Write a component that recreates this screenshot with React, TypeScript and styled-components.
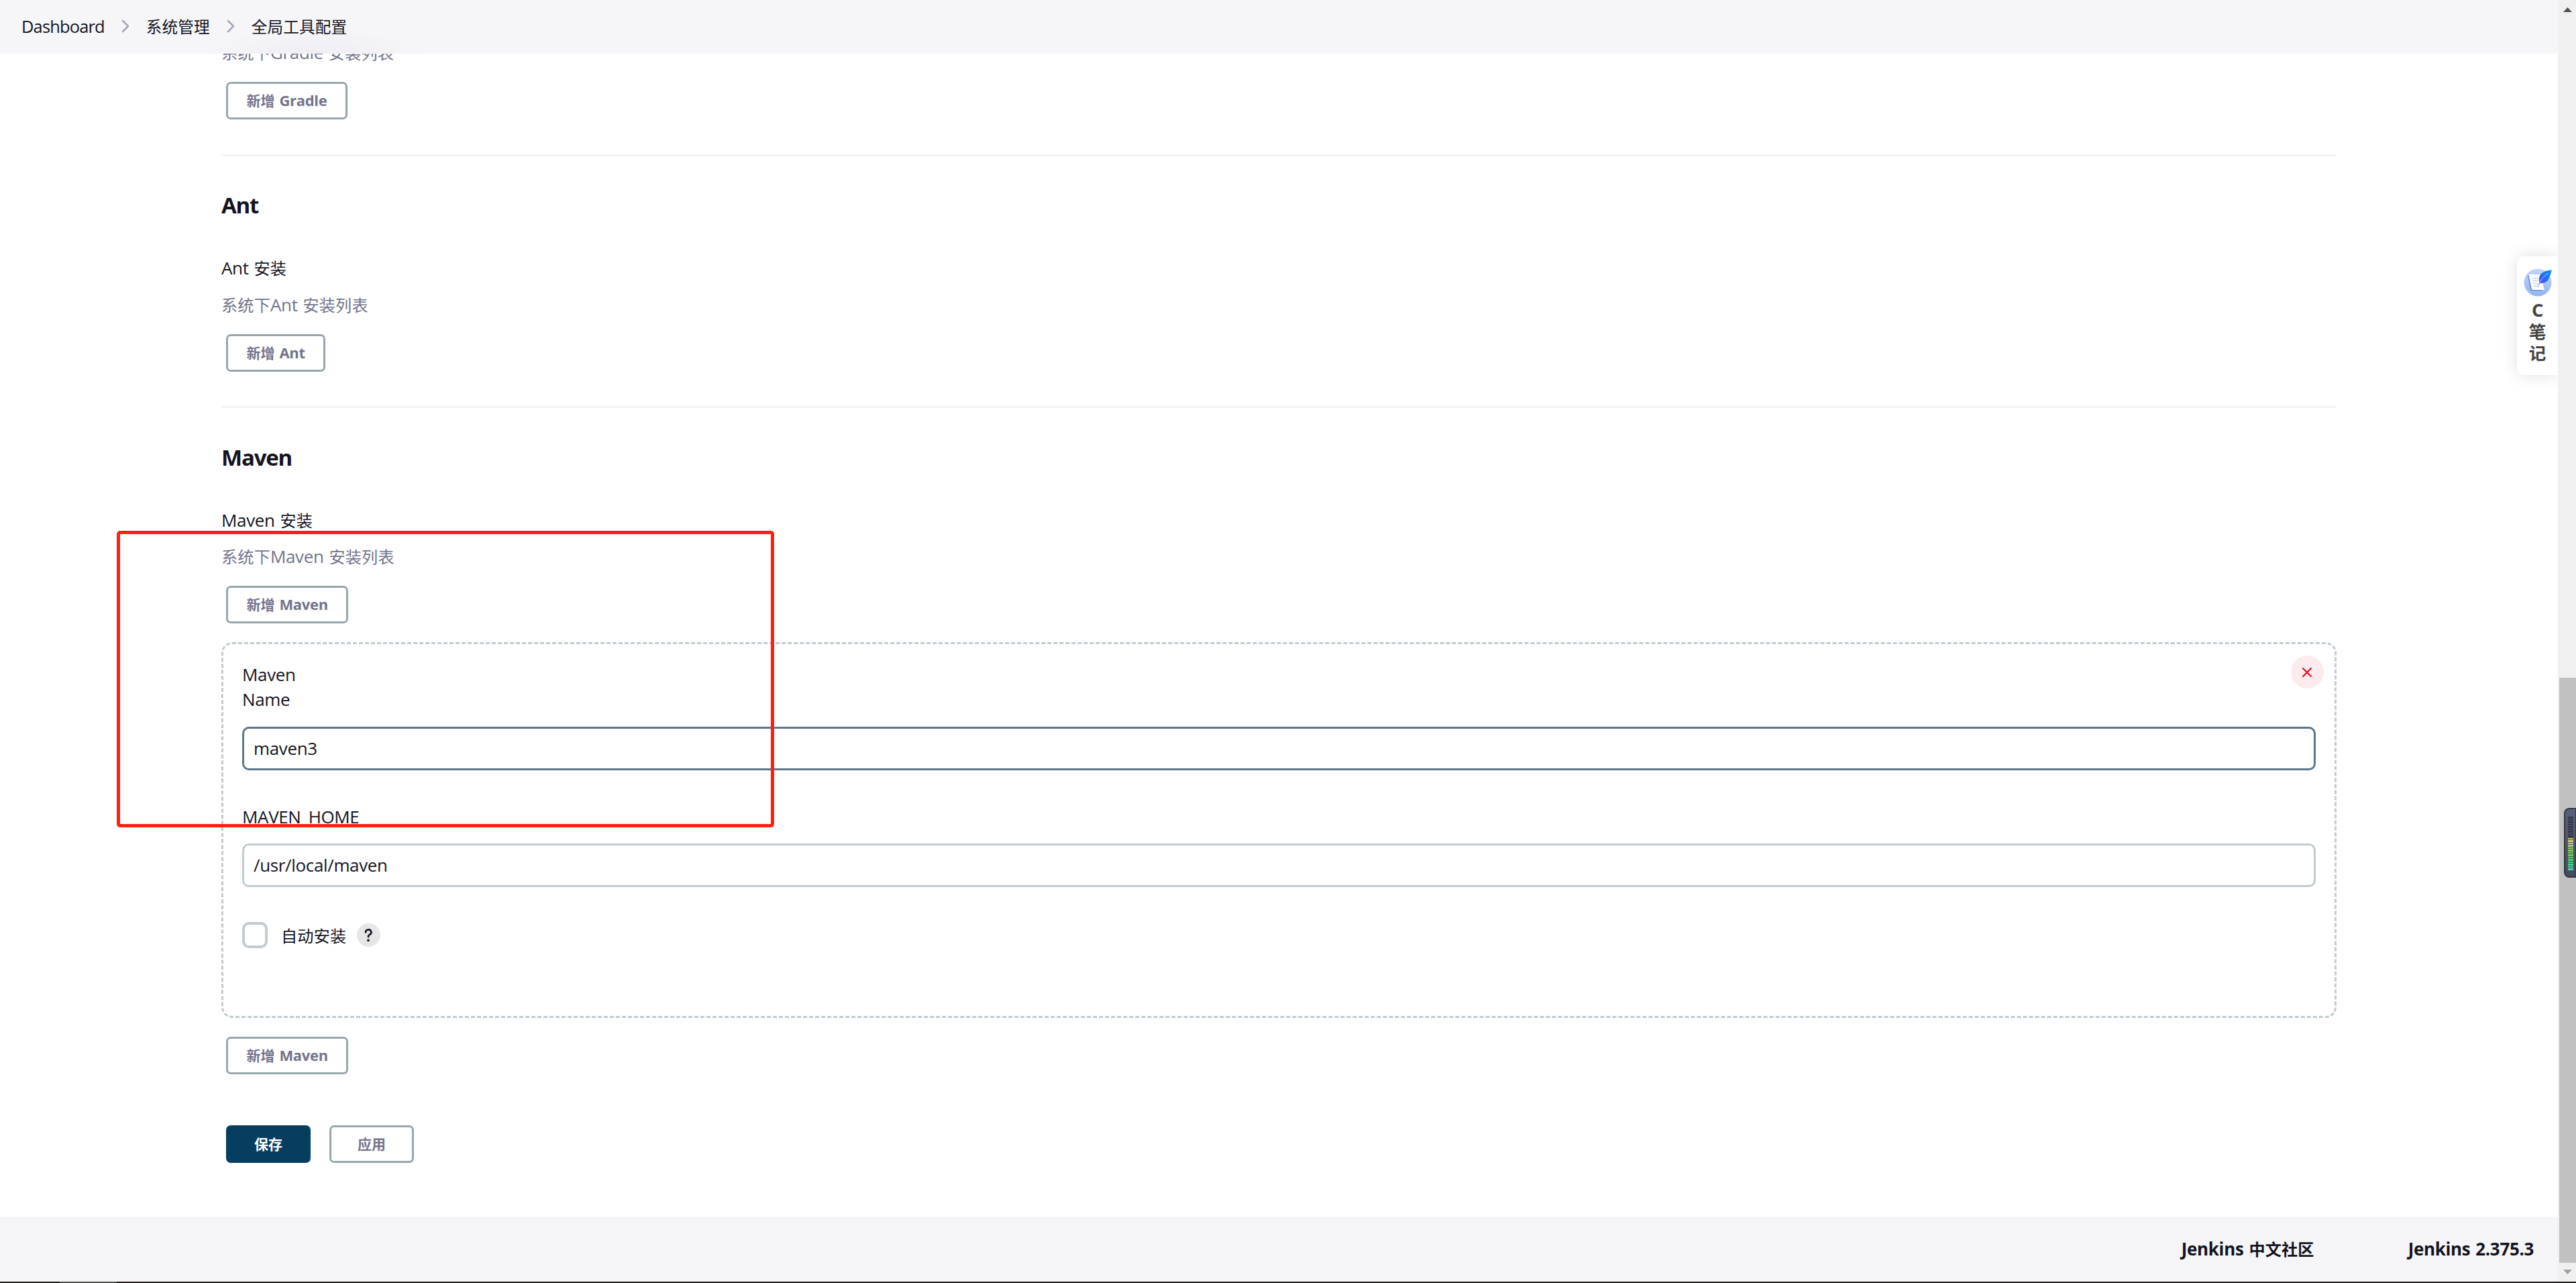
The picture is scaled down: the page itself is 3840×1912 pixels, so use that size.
import { FC, Fragment } from 'react';
import styled, { createGlobalStyle, css } from 'styled-components';

const GlobalStyle = createGlobalStyle`
  * { box-sizing: border-box; }
  body {
    margin: 0;
    overflow: hidden;
    background: #fff;
    color: #14141f;
    font-family: "Open Sans", "Noto Sans CJK SC", sans-serif;
    font-size: 26px;
    line-height: 36px;
    letter-spacing: -0.35px;
    word-spacing: 1.5px;
  }
`;

const Screen = styled.div`
  width: 3840px;
  height: 1912px;
  display: flex;
  flex-direction: column;
  position: relative;
`;

const Viewport = styled.div`
  flex: 1;
  min-height: 0;
  display: flex;
`;

const Page = styled.div`
  flex: 1;
  display: flex;
  flex-direction: column;
`;

// Chinese glyphs run a little smaller than the latin ones
const Han = styled.span`
  font-size: 0.93em;
  letter-spacing: 0.006em;
  line-height: 0;
`;

const Breadcrumbs = styled.header`
  height: 80px;
  flex: none;
  display: flex;
  align-items: center;
  padding: 0 0 2px 32px;
  font-size: 25.4px;
  letter-spacing: -0.8px;
  background:
    radial-gradient(ellipse 170px 44px at 470px 84px, #eeedf3, transparent),
    #f6f6f8;
`;

const Chevron = styled.svg`
  width: 12px;
  height: 20px;
  margin: 0 25px;
  fill: none;
  stroke: #a6a6ba;
  stroke-width: 2.6;
  stroke-linecap: round;
  stroke-linejoin: round;
`;

const Content = styled.main`
  flex: 1;
  min-height: 0;
  overflow: hidden;
  padding: 0 330px;
`;

const Section = styled.section<{ $top?: number }>`
  display: flex;
  flex-direction: column;
  align-items: flex-start;
  padding-top: ${({ $top }) => $top ?? 0}px;
`;

const Divider = styled.hr<{ $top: number }>`
  height: 3px;
  margin: ${({ $top }) => $top}px 0 0;
  border: 0;
  background: #f3f3f8;
`;

const Heading = styled.h2`
  margin: 0 0 52px;
  font-size: 33px;
  font-weight: 700;
  line-height: 46px;
  letter-spacing: -1.2px;
`;

const Label = styled.div<{ $gap?: number }>`
  margin-bottom: ${({ $gap }) => $gap ?? 19}px;
`;

const Description = styled.div<{ $clipped?: boolean }>`
  margin: ${({ $clipped }) => ($clipped ? -20 : 0)}px 0 26px;
  color: #73738c;
`;

const Button = styled.button<{ $primary?: boolean; $wide?: boolean }>`
  height: 56px;
  margin-left: 7px;
  padding: 0 ${({ $wide }) => ($wide ? 39 : 27.5)}px 2px;
  border: 3px solid #98a6ad;
  border-radius: 7px;
  background: #fff;
  color: #73738c;
  font: inherit;
  font-size: 22px;
  font-weight: 700;
  letter-spacing: -0.3px;
  word-spacing: inherit;

  ${Han} {
    font-size: 21px;
    letter-spacing: 0;
  }
  ${({ $primary }) => $primary && css`
    border-color: #073e60;
    background: #073e60;
    color: #fff;
  `}
`;

const Repeated = styled.div`
  position: relative;
  width: 100%;
  height: 560px;
  margin: 28px 0;
  padding: 27px 28px 0;
  border: 3px dashed #c2cbd0;
  border-radius: 16px;
`;

const FieldLabel = styled.label<{ $tall?: boolean }>`
  display: block;
  line-height: ${({ $tall }) => ($tall ? 37 : 36)}px;
`;

const Input = styled.input<{ $focused?: boolean }>`
  display: block;
  width: 100%;
  height: 65px;
  margin: 22px 0 51px;
  padding: 0 13px 1px 14px;
  border: 3px solid ${({ $focused }) => ($focused ? '#5c7889' : '#c2cbd0')};
  border-radius: 10px;
  outline: none;
  background: #fff;
  color: inherit;
  font: inherit;
  letter-spacing: inherit;
`;

const CheckRow = styled.div`
  display: flex;
  align-items: center;
  margin-top: 52px;
`;

const Checkbox = styled.span`
  width: 38px;
  height: 39px;
  margin-right: 20px;
  border: 4px solid #c2cbd0;
  border-radius: 10px;
`;

const Help = styled.span`
  width: 35px;
  height: 35px;
  margin-left: 16px;
  display: grid;
  place-items: center;
  border-radius: 50%;
  background: #e6e6e6;

  svg {
    width: 35px;
    height: 35px;
  }
`;

const Remove = styled.button`
  position: absolute;
  top: 17px;
  right: 16px;
  width: 49px;
  height: 49px;
  padding: 0 1px 0 0;
  display: grid;
  place-items: center;
  border: 0;
  border-radius: 50%;
  background: #fcebed;

  svg {
    width: 14px;
    height: 14px;
    stroke: #e6001f;
    stroke-width: 2;
    stroke-linecap: round;
  }
`;

const Actions = styled.div`
  display: flex;
  gap: 21px;
  margin-top: 76px;
`;

const Footer = styled.footer`
  height: 97px;
  flex: none;
  display: flex;
  align-items: center;
  justify-content: flex-end;
  gap: 140px;
  padding: 0 36px 2px 0;
  background: #f5f5f8;
  font-weight: 700;
`;

const Scrollbar = styled.div`
  width: 27px;
  flex: none;
  display: flex;
  flex-direction: column;
  align-items: flex-end;
  justify-content: space-between;
  background: #f0f0f0;
`;

const Arrow = styled.svg<{ $disabled?: boolean }>`
  width: 25px;
  height: 28px;
  fill: ${({ $disabled }) => ($disabled ? '#a0a0a0' : '#505050')};
`;

const Thumb = styled.div`
  width: 25px;
  height: 872px;
  margin-top: auto;
  background: #c1c1c1;
`;

const Taskbar = styled.div`
  height: 2px;
  background: linear-gradient(90deg, #1b1a14 89px, #4c4d47 89px 174px, #1d1714 174px, #1c1a16);
`;

const Highlight = styled.div`
  position: absolute;
  left: 174px;
  top: 791px;
  width: 980px;
  height: 442px;
  border: 5px solid #ff2010;
  border-radius: 5px;
`;

const NoteTab = styled.aside`
  position: absolute;
  left: 3752px;
  top: 382px;
  width: 61px;
  height: 177px;
  padding-top: 18px;
  display: flex;
  flex-direction: column;
  align-items: center;
  border-radius: 10px 0 0 10px;
  background: #fff;
  box-shadow: 0 0 24px rgba(0, 0, 0, 0.13);
  clip-path: inset(-40px 0 -40px -40px);

  svg {
    width: 42px;
    height: 42px;
    margin-bottom: 4px;
  }
`;

const NoteChar = styled.span`
  color: #444;
  font-size: 27.5px;
  font-weight: 700;
  line-height: 32px;
`;

const Meter = styled.div`
  position: absolute;
  left: 3822px;
  top: 1204px;
  width: 18px;
  height: 104px;
  padding: 11px 3px 0 4px;
  display: flex;
  flex-direction: column;
  gap: 1px;
  border: 2px solid #343842;
  border-right-width: 1px;
  border-radius: 8px 0 0 8px;
  background: linear-gradient(#59607a, #454a5b);
`;

const Bar = styled.i<{ $color: string }>`
  height: 2.5px;
  flex: none;
  background: ${({ $color }) => $color};
`;

const crumbs = ['Dashboard', '系统管理', '全局工具配置'];

const bars = Array.from({ length: 23 }, (_, i) =>
  i < 9 ? '#343845' : `hsl(${50 + (i - 9) * 9}, 58%, 56%)`
);

// splits a caption into its latin and chinese runs
const Text: FC<{ children: string }> = ({ children }) => (
  <span>
    {children.split(/([\u4e00-\u9fff]+)/).filter(Boolean).map((part, i) =>
      part > '\u4e00' ? <Han key={i}>{part}</Han> : part
    )}
  </span>
);

const NoteIcon = () => (
  <svg viewBox="0 0 42 42">
    <defs>
      <linearGradient id="disc" x1="0" y1="0" x2="0" y2="1">
        <stop offset="0" stopColor="#c3d6fa" />
        <stop offset="1" stopColor="#94b4f6" />
      </linearGradient>
      <linearGradient id="feather" x1="1" y1="0" x2="0" y2="1">
        <stop offset="0" stopColor="#0a9bff" />
        <stop offset="0.6" stopColor="#2f60f0" />
        <stop offset="1" stopColor="#8b4df0" />
      </linearGradient>
    </defs>
    <circle cx="21" cy="21" r="20.5" fill="url(#disc)" />
    <path d="M6 10h3l5 22h14l-1 1.500H12.500Q10 33 9.500 30z" fill="#6f8fdc" />
    <path d="M7.500 9H25l5.500 21.500Q31 32 29.500 32H14Q12 32 11.500 29z" fill="#fff" />
    <path d="M13 14.500h9M13.500 18.500h8M14 22.500h7M14.500 26.500h9" stroke="#c0cdf5" strokeWidth="1.400" />
    <path d="M42 2.500Q27 3 23.500 12Q22 17 23.500 20.500L21 26L25 22Q34 23 38 14Q40 10 42 2.500z" fill="url(#feather)" />
    <path d="M37 7Q27 13 21 26" fill="none" stroke="#a7c8ff" strokeWidth="1" />
  </svg>
);

export default function App() {
  return (
    <Screen>
      <GlobalStyle />
      <Viewport>
        <Page>
          <Breadcrumbs>
            {crumbs.map((crumb, i) => (
              <Fragment key={crumb}>
                {i > 0 && (
                  <Chevron viewBox="0 0 12 20"><path d="M2 2l8 8-8 8" /></Chevron>
                )}
                <Text>{crumb}</Text>
              </Fragment>
            ))}
          </Breadcrumbs>
          <Content>
            <Section>
              <Description $clipped><Text>系统下Gradle 安装列表</Text></Description>
              <Button><Text>新增 Gradle</Text></Button>
            </Section>
            <Divider $top={52} />
            <Section $top={50}>
              <Heading>Ant</Heading>
              <Label><Text>Ant 安装</Text></Label>
              <Description><Text>系统下Ant 安装列表</Text></Description>
              <Button><Text>新增 Ant</Text></Button>
            </Section>
            <Divider $top={51} />
            <Section $top={51}>
              <Heading>Maven</Heading>
              <Label $gap={18}><Text>Maven 安装</Text></Label>
              <Description><Text>系统下Maven 安装列表</Text></Description>
              <Button><Text>新增 Maven</Text></Button>
              <Repeated>
                <Remove aria-label="remove">
                  <svg viewBox="0 0 14 14"><path d="M1 1l12 12M13 1L1 13" /></svg>
                </Remove>
                <FieldLabel $tall>Maven</FieldLabel>
                <FieldLabel $tall>Name</FieldLabel>
                <Input $focused defaultValue="maven3" />
                <FieldLabel>MAVEN_HOME</FieldLabel>
                <Input defaultValue="/usr/local/maven" />
                <CheckRow>
                  <Checkbox />
                  <Text>自动安装</Text>
                  <Help>
                    <svg viewBox="0 0 35 35" fill="none" stroke="#14141f" strokeWidth="2.600" strokeLinecap="round">
                      <path d="M13 13.500a4.200 3.900 0 1 1 6.200 3.200Q17 18 17 20.300" />
                      <circle cx="17" cy="25.300" r="1.900" fill="#14141f" stroke="none" />
                    </svg>
                  </Help>
                </CheckRow>
              </Repeated>
              <Button><Text>新增 Maven</Text></Button>
              <Actions>
                <Button $primary $wide><Text>保存</Text></Button>
                <Button $wide><Text>应用</Text></Button>
              </Actions>
            </Section>
          </Content>
          <Footer>
            <Text>Jenkins 中文社区</Text>
            <Text>Jenkins 2.375.3</Text>
          </Footer>
        </Page>
        <Scrollbar>
          <Arrow viewBox="0 0 25 28"><path d="M12.500 11l6.500 7h-13z" /></Arrow>
          <Thumb />
          <Arrow $disabled viewBox="0 0 25 28"><path d="M12.500 17l6.500-7h-13z" /></Arrow>
        </Scrollbar>
      </Viewport>
      <Taskbar />
      <Highlight />
      <NoteTab>
        <NoteIcon />
        {['C', '笔', '记'].map((char) => (
          <NoteChar key={char}><Text>{char}</Text></NoteChar>
        ))}
      </NoteTab>
      <Meter>
        {bars.map((color, i) => <Bar key={i} $color={color} />)}
      </Meter>
    </Screen>
  );
}
